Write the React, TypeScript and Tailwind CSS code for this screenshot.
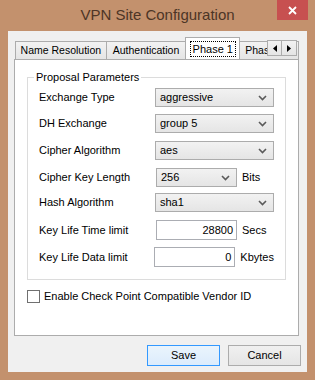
import React from 'react';

const font = { fontFamily: '"Liberation Sans", Arial, sans-serif' };

const Chevron: React.FC = () => (
  <svg width="9" height="6" viewBox="0 0 9 6" className="shrink-0">
    <path d="M1 1 L4.5 4.5 L8 1" fill="none" stroke="#5a5a5a" strokeWidth="1.6" />
  </svg>
);

const Combo: React.FC<{ value: string; wide?: boolean }> = ({ value, wide = true }) => (
  <div
    className={`${wide ? 'w-[119px]' : 'w-[81px]'} h-[19px] border border-[#acacac] bg-gradient-to-b from-[#f2f2f2] to-[#e5e5e5] flex items-center justify-between pl-[4px] pr-[6px] text-[11px] text-black`}
  >
    <span>{value}</span>
    <Chevron />
  </div>
);

const NumField: React.FC<{ value: string }> = ({ value }) => (
  <div className="w-[81px] h-[20px] border border-[#abadb3] bg-white flex items-center justify-end pr-[3px] text-[11px] text-black">
    {value}
  </div>
);

const Row: React.FC<{ label: string; mt: string; children: React.ReactNode }> = ({ label, mt, children }) => (
  <div className={`flex items-center ${mt}`}>
    <span className="w-[117px] text-[11px] text-black">{label}</span>
    <div className="flex items-center gap-[5px] text-[11px] text-black">{children}</div>
  </div>
);

const tabCls =
  'h-[18px] flex items-center justify-center border border-b-0 border-[#acacac] bg-gradient-to-b from-[#f2f2f2] to-[#e5e5e5] text-[10.5px] whitespace-nowrap overflow-hidden';

const App: React.FC = () => {
  return (
    <div style={font} className="w-[315px] h-[380px] bg-[#c3916d] flex flex-col px-[8px] pb-[8px]">
      {/* title bar */}
      <div className="relative h-[31px] flex items-center justify-center">
        <span className="text-[15px] text-[#4d3526]">VPN Site Configuration</span>
        <div className="absolute -right-[1px] top-0 w-[31px] h-[20px] bg-[#c75050] flex items-center justify-center">
          <svg width="9" height="9" viewBox="0 0 9 9">
            <path d="M1 1 L8 8 M8 1 L1 8" stroke="#fff" strokeWidth="1.8" />
          </svg>
        </div>
      </div>

      {/* client area */}
      <div className="flex-1 bg-[#f0f0f0] flex flex-col px-[6px] pt-[6px]">
        {/* tabs */}
        <div className="relative h-[22px] flex items-end pl-[1px] overflow-hidden w-[285px]">
          <div className={`${tabCls} w-[92px]`}>Name Resolution</div>
          <div className={`${tabCls} w-[80px] border-l-0`}>Authentication</div>
          <div className="relative z-10 -mb-[1px] -mx-[1px] w-[55px] h-[23px] flex items-center justify-center border border-b-0 border-[#acacac] bg-white text-[11px] whitespace-nowrap">
            <span className="border border-dotted border-black px-[2px] leading-[14px]">Phase 1</span>
          </div>
          <div className={`${tabCls} w-[60px] border-l-0 justify-start pl-[6px]`}>Phase 2</div>
          <div className="absolute right-[2px] top-[3px] flex">
            <div className="w-[15px] h-[16px] border border-[#acacac] bg-gradient-to-b from-[#f2f2f2] to-[#e5e5e5] flex items-center justify-center">
              <svg width="4" height="7" viewBox="0 0 4 7"><path d="M4 0 L0 3.5 L4 7 Z" fill="#000" /></svg>
            </div>
            <div className="w-[15px] h-[16px] border border-l-0 border-[#acacac] bg-gradient-to-b from-[#f2f2f2] to-[#e5e5e5] flex items-center justify-center">
              <svg width="4" height="7" viewBox="0 0 4 7"><path d="M0 0 L4 3.5 L0 7 Z" fill="#000" /></svg>
            </div>
          </div>
        </div>

        {/* tab panel */}
        <div className="w-[285px] h-[277px] border border-[#acacac] bg-white flex flex-col px-[12px] pt-[11px]">
          <div className="relative h-[203px] border border-[#dcdcdc] mt-[6px] px-[11px] pt-[5px] flex flex-col">
            <span className="absolute -top-[8px] left-[6px] bg-white px-[2px] text-[11px] text-black leading-[14px]">
              Proposal Parameters
            </span>
            <Row label="Exchange Type" mt="mt-[5px]"><Combo value="aggressive" /></Row>
            <Row label="DH Exchange" mt="mt-[7px]"><Combo value="group 5" /></Row>
            <Row label="Cipher Algorithm" mt="mt-[8px]"><Combo value="aes" /></Row>
            <Row label="Cipher Key Length" mt="mt-[8px]"><Combo value="256" wide={false} /><span>Bits</span></Row>
            <Row label="Hash Algorithm" mt="mt-[6px]"><Combo value="sha1" /></Row>
            <Row label="Key Life Time limit" mt="mt-[8px]"><NumField value="28800" /><span>Secs</span></Row>
            <Row label="Key Life Data limit" mt="mt-[7px]"><NumField value="0" /><span>Kbytes</span></Row>
          </div>
          <label className="flex items-center gap-[4px] mt-[8px] text-[11px] text-black">
            <span className="w-[13px] h-[13px] border border-[#707070] bg-white" />
            Enable Check Point Compatible Vendor ID
          </label>
        </div>

        {/* buttons */}
        <div className="flex justify-end gap-[8px] mt-[9px]">
          <button className="w-[73px] h-[21px] border border-[#3399ff] bg-gradient-to-b from-[#eaf4fc] to-[#dcecfc] text-[11px] text-black">
            Save
          </button>
          <button className="w-[73px] h-[21px] border border-[#acacac] bg-gradient-to-b from-[#f0f0f0] to-[#e5e5e5] text-[11px] text-black">
            Cancel
          </button>
        </div>
      </div>
    </div>
  );
};

export default App;
